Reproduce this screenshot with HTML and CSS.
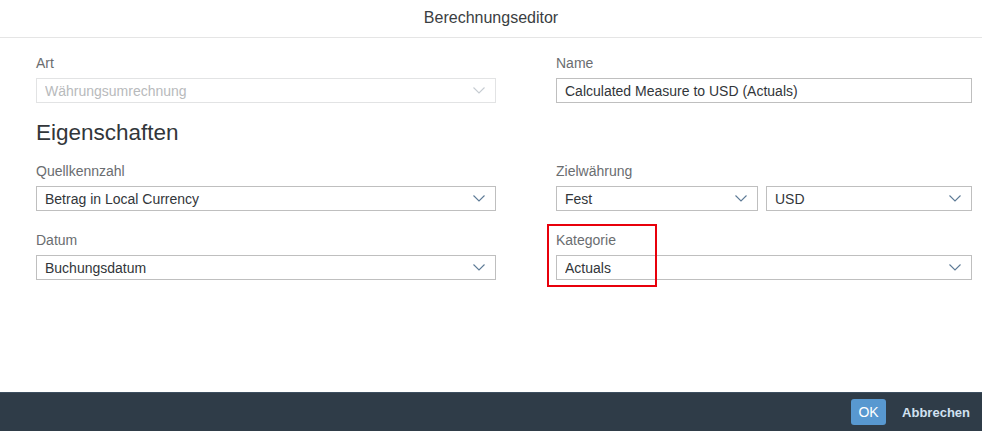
FILE: index.html
```html
<!DOCTYPE html>
<html lang="de">
<head>
<meta charset="utf-8">
<title>Berechnungseditor</title>
<link rel="stylesheet" href="styles.css">
</head>
<body>
<div class="dialog">
  <header class="dialog-header">Berechnungseditor</header>
  <main class="dialog-body">
    <div class="row">
      <div class="field">
        <label class="label">Art</label>
        <div class="select disabled">
          <span class="value">Währungsumrechnung</span>
          <svg class="chev" viewBox="0 0 12 7"><path d="M0.5 0.5 L6 6 L11.5 0.5"/></svg>
        </div>
      </div>
      <div class="field">
        <label class="label">Name</label>
        <div class="input"><span class="value">Calculated Measure to USD (Actuals)</span></div>
      </div>
    </div>

    <h2 class="section-title">Eigenschaften</h2>

    <div class="row">
      <div class="field">
        <label class="label">Quellkennzahl</label>
        <div class="select">
          <span class="value">Betrag in Local Currency</span>
          <svg class="chev" viewBox="0 0 12 7"><path d="M0.5 0.5 L6 6 L11.5 0.5"/></svg>
        </div>
      </div>
      <div class="field">
        <label class="label">Zielwährung</label>
        <div class="pair">
          <div class="select">
            <span class="value">Fest</span>
            <svg class="chev" viewBox="0 0 12 7"><path d="M0.5 0.5 L6 6 L11.5 0.5"/></svg>
          </div>
          <div class="select">
            <span class="value">USD</span>
            <svg class="chev" viewBox="0 0 12 7"><path d="M0.5 0.5 L6 6 L11.5 0.5"/></svg>
          </div>
        </div>
      </div>
    </div>

    <div class="row row-gap">
      <div class="field">
        <label class="label">Datum</label>
        <div class="select">
          <span class="value">Buchungsdatum</span>
          <svg class="chev" viewBox="0 0 12 7"><path d="M0.5 0.5 L6 6 L11.5 0.5"/></svg>
        </div>
      </div>
      <div class="field highlighted">
        <label class="label">Kategorie</label>
        <div class="select">
          <span class="value">Actuals</span>
          <svg class="chev" viewBox="0 0 12 7"><path d="M0.5 0.5 L6 6 L11.5 0.5"/></svg>
        </div>
        <div class="highlight-box"></div>
      </div>
    </div>
  </main>
  <footer class="dialog-footer">
    <button class="btn btn-primary">OK</button>
    <button class="btn btn-ghost">Abbrechen</button>
  </footer>
</div>
</body>
</html>
```

FILE: styles.css
```css
* { box-sizing: border-box; }

html, body {
  margin: 0;
  padding: 0;
  height: 100%;
  background: #ffffff;
  font-family: "Liberation Sans", Arial, sans-serif;
  color: #32363a;
}

.dialog {
  display: flex;
  flex-direction: column;
  height: 431px;
  width: 982px;
}

.dialog-header {
  height: 38px;
  border-bottom: 1px solid #e5e5e5;
  display: flex;
  align-items: center;
  justify-content: center;
  font-size: 16px;
  color: #3a3e42;
  padding-bottom: 1px;
}

.dialog-body {
  flex: 1;
  padding: 16px 10px 0 36px;
}

.row {
  display: grid;
  grid-template-columns: 460px 416px;
  column-gap: 60px;
}

.row-gap { margin-top: 20px; }

.field { position: relative; }

.label {
  display: block;
  font-size: 14px;
  line-height: 18px;
  color: #6a6d70;
  margin-bottom: 6px;
}

.select, .input {
  height: 25px;
  border: 1px solid #bfbfbf;
  background: #fff;
  display: flex;
  align-items: center;
  padding: 0 10px 0 8px;
  font-size: 14px;
  color: #32363a;
}

.value {
  flex: 1;
  white-space: nowrap;
  overflow: hidden;
}

.chev {
  width: 12px;
  height: 7px;
  fill: none;
  stroke: #5d7a96;
  stroke-width: 1.1;
  flex: none;
}

.select.disabled {
  border-color: #e2e3e4;
  color: #b8babc;
}
.select.disabled .chev { stroke: #c6ccd2; }

.pair {
  display: grid;
  grid-template-columns: 202px 206px;
  column-gap: 8px;
}

.section-title {
  margin: 16px 0 15px;
  font-size: 22.5px;
  line-height: 28px;
  font-weight: normal;
  color: #32363a;
}

.highlight-box {
  position: absolute;
  left: -9px;
  top: -7px;
  width: 110px;
  height: 63px;
  border: 2px solid #e8000b;
  pointer-events: none;
}

.dialog-footer {
  height: 39px;
  background: #2f3c48;
  border-top: 1px solid #3d4f60;
  display: flex;
  align-items: center;
  justify-content: flex-end;
  gap: 16px;
  padding-right: 12px;
}

.btn {
  font-family: "Liberation Sans", Arial, sans-serif;
  font-size: 14px;
  border: none;
  cursor: pointer;
  height: 26px;
  padding: 0;
}

.btn-primary {
  width: 35px;
  background: #5898d0;
  color: #ffffff;
  border-radius: 3px;
}

.btn-ghost {
  background: transparent;
  color: #d1e1f1;
  font-weight: bold;
  font-size: 13px;
}
```
